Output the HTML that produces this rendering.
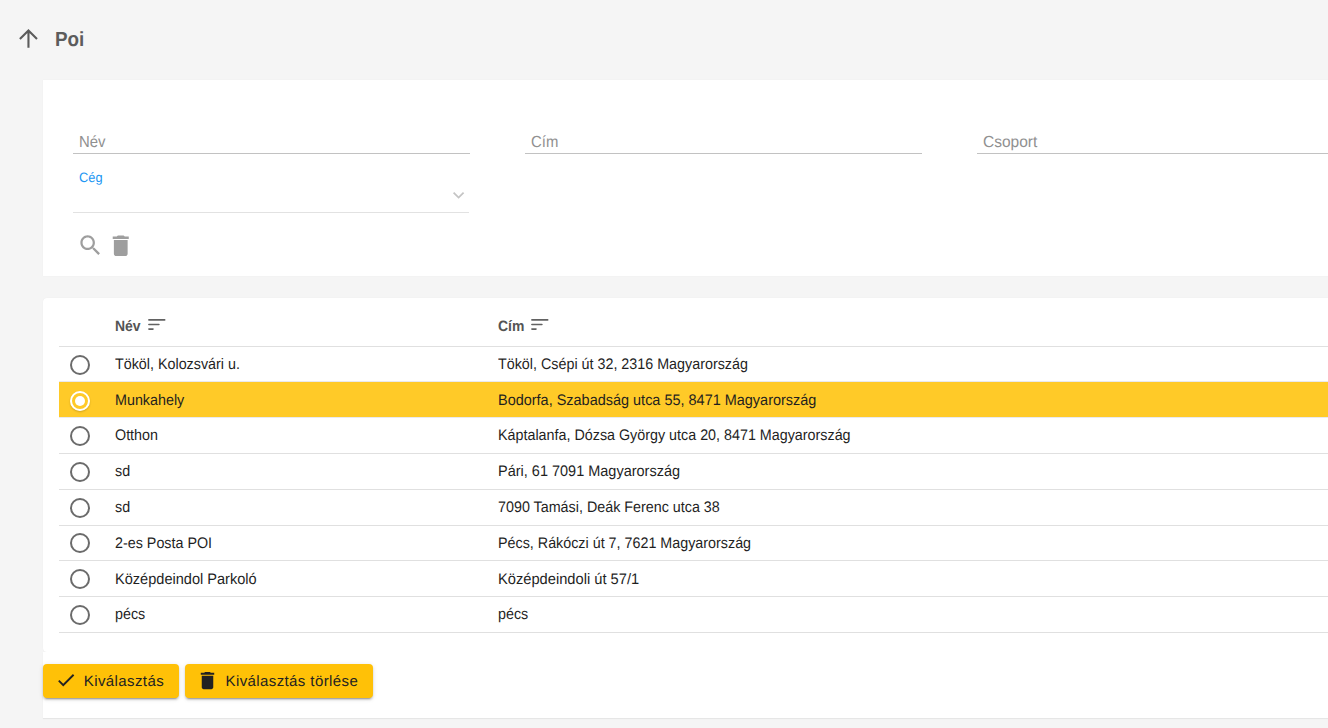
<!DOCTYPE html>
<html><head><meta charset="utf-8">
<style>
html,body{margin:0;padding:0;}
body{width:1328px;height:728px;overflow:hidden;text-rendering:geometricPrecision;background:#f5f5f5;position:relative;font-family:"Liberation Sans",sans-serif;}
.a{position:absolute;white-space:nowrap;line-height:1;transform-origin:0 0;}
.card{position:absolute;background:#fff;}
.uline{position:absolute;height:1px;background:#c2c2c2;}
.rline{position:absolute;left:59px;width:1269px;height:1px;background:#e0e0e0;}
.radio{position:absolute;left:70px;width:16px;height:16px;border:2px solid #6b6b6b;border-radius:50%;}
.t{position:absolute;white-space:nowrap;line-height:1;font-size:15.3px;color:#1f1f1f;transform:scaleX(0.936);transform-origin:0 0;}
.lbl{font-size:16px;color:#909090;transform:scaleX(0.93);}
.hd{font-size:15px;font-weight:bold;color:#545454;transform:scaleX(0.93);}
.btn{position:absolute;top:664px;height:34px;background:#ffc107;border-radius:4px;box-shadow:0 3px 1px -2px rgba(0,0,0,.2),0 2px 2px 0 rgba(0,0,0,.14),0 1px 5px 0 rgba(0,0,0,.12);}
.bt{font-size:15px;letter-spacing:0.4px;color:#222222;}
</style></head>
<body>

<svg class="a" style="left:0;top:0" width="60" height="60" viewBox="0 0 60 60"><path d="M28.46 31.5V47.75M19.9 39.1L28.46 30.6L37 39.1" fill="none" stroke="#5c5c5c" stroke-width="2.1"/></svg>
<div class="a" style="left:54.9px;top:30.2px;font-size:20.5px;font-weight:bold;color:#5c5c5c;transform:scaleX(0.92)">Poi</div>
<div class="card" style="left:43px;top:80px;width:1300px;height:196px;box-shadow:0 0 1px rgba(0,0,0,.06)"></div>
<div class="a lbl" style="left:79.3px;top:134.9px">Név</div>
<div class="uline" style="left:73px;top:153px;width:397px"></div>
<div class="a lbl" style="left:531.3px;top:134.9px">Cím</div>
<div class="uline" style="left:525px;top:153px;width:397px"></div>
<div class="a lbl" style="left:983.3px;top:134.9px;transform:scaleX(0.97)">Csoport</div>
<div class="uline" style="left:977px;top:153px;width:360px"></div>
<div class="a" style="left:79px;top:170.5px;font-size:13.5px;color:#2196f3;transform:scaleX(0.95)">Cég</div>
<div class="uline" style="left:73px;top:212px;width:396px;background:#e2e2e2"></div>
<svg class="a" style="left:440px;top:180px" width="40" height="30" viewBox="0 0 40 30"><path d="M13.6 12.6l5 5 5-5" fill="none" stroke="#c4c4c4" stroke-width="1.7"/></svg>
<svg class="a" style="left:76.7px;top:231.7px" width="26.9" height="26.9" viewBox="0 0 24 24"><path fill="#9e9e9e" d="M15.5 14h-.79l-.28-.27C15.41 12.59 16 11.11 16 9.5 16 5.91 13.09 3 9.5 3S3 5.91 3 9.5 5.91 16 9.5 16c1.61 0 3.09-.59 4.23-1.57l.27.28v.79l5 4.99L20.49 19l-4.99-5zm-6 0C7.01 14 5 11.99 5 9.5S7.01 5 9.5 5 14 7.01 14 9.5 11.99 14 9.5 14z"/></svg>
<svg class="a" style="left:107.25px;top:231.6px" width="27.5" height="27.5" viewBox="0 0 24 24"><path fill="#9e9e9e" d="M6 19c0 1.1.9 2 2 2h8c1.1 0 2-.9 2-2V7H6v12zM19 4h-3.5l-1-1h-5l-1 1H5v2h14V4z"/></svg>
<div class="card" style="left:43px;top:298px;width:1300px;height:354px;border-radius:4px;box-shadow:0 0 1px rgba(0,0,0,.08)"></div>
<div class="card" style="left:43px;top:652px;width:1300px;height:66px;box-shadow:0 1px 1px rgba(0,0,0,.06)"></div>
<div class="a hd" style="left:114.7px;top:319px">Név</div>
<svg class="a" style="left:148.0px;top:310px" width="24" height="24" viewBox="0 0 24 24"><path d="M0.9 9.9h15.8M0.9 14.5h10M0.9 19.1h4.1" stroke="#626262" stroke-width="1.6" stroke-linecap="round" fill="none"/></svg>
<div class="a hd" style="left:497.7px;top:319px">Cím</div>
<svg class="a" style="left:531.2px;top:310px" width="24" height="24" viewBox="0 0 24 24"><path d="M0.9 9.9h15.8M0.9 14.5h10M0.9 19.1h4.1" stroke="#626262" stroke-width="1.6" stroke-linecap="round" fill="none"/></svg>
<div class="rline" style="top:346px"></div>
<div class="rline" style="top:381px;background:#e9e9ee"></div>
<div class="rline" style="top:417px;background:#e9e9ee"></div>
<div class="rline" style="top:453px"></div>
<div class="rline" style="top:489px"></div>
<div class="rline" style="top:525px"></div>
<div class="rline" style="top:560px"></div>
<div class="rline" style="top:596px"></div>
<div class="rline" style="top:632px"></div>
<div style="position:absolute;left:59px;top:382px;width:1269px;height:35px;background:#ffca28"></div>
<div class="radio" style="top:355px"></div>
<div class="t" style="left:115px;top:357.00px;transform:scaleX(0.9360)">Tököl, Kolozsvári u.</div>
<div class="t" style="left:498px;top:357.00px;transform:scaleX(0.9360)">Tököl, Csépi út 32, 2316 Magyarország</div>
<div class="radio" style="top:391px;border-color:#fff;box-shadow:0 1px 2px rgba(0,0,0,.2)"><div style="position:absolute;left:3px;top:3px;width:10px;height:10px;border-radius:50%;background:#fff"></div></div>
<div class="t" style="left:115px;top:393.00px;transform:scaleX(0.9360)">Munkahely</div>
<div class="t" style="left:498px;top:393.00px;transform:scaleX(0.9454)">Bodorfa, Szabadság utca 55, 8471 Magyarország</div>
<div class="radio" style="top:426px"></div>
<div class="t" style="left:115px;top:428.00px;transform:scaleX(0.9360)">Otthon</div>
<div class="t" style="left:498px;top:428.00px;transform:scaleX(0.9360)">Káptalanfa, Dózsa György utca 20, 8471 Magyarország</div>
<div class="radio" style="top:462px"></div>
<div class="t" style="left:115px;top:464.00px;transform:scaleX(0.9360)">sd</div>
<div class="t" style="left:498px;top:464.00px;transform:scaleX(0.9472)">Pári, 61 7091 Magyarország</div>
<div class="radio" style="top:498px"></div>
<div class="t" style="left:115px;top:500.00px;transform:scaleX(0.9360)">sd</div>
<div class="t" style="left:498px;top:500.00px;transform:scaleX(0.9360)">7090 Tamási, Deák Ferenc utca 38</div>
<div class="radio" style="top:533px"></div>
<div class="t" style="left:115px;top:536.00px;transform:scaleX(0.9360)">2-es Posta POI</div>
<div class="t" style="left:498px;top:536.00px;transform:scaleX(0.9360)">Pécs, Rákóczi út 7, 7621 Magyarország</div>
<div class="radio" style="top:569px"></div>
<div class="t" style="left:115px;top:572.00px;transform:scaleX(0.9519)">Középdeindol Parkoló</div>
<div class="t" style="left:498px;top:572.00px;transform:scaleX(0.9594)">Középdeindoli út 57/1</div>
<div class="radio" style="top:605px"></div>
<div class="t" style="left:115px;top:607.00px;transform:scaleX(0.9360)">pécs</div>
<div class="t" style="left:498px;top:607.00px;transform:scaleX(0.9360)">pécs</div>
<div class="btn" style="left:43px;width:136px"></div>
<svg class="a" style="left:55px;top:669px" width="22" height="22" viewBox="0 0 24 24"><path fill="#222222" d="M9 16.17L4.83 12l-1.42 1.41L9 19 21 7l-1.41-1.41z"/></svg>
<div class="a bt" style="left:83.8px;top:673.7px">Kiválasztás</div>
<div class="btn" style="left:185px;width:188px"></div>
<svg class="a" style="left:196px;top:669px" width="23" height="23" viewBox="0 0 24 24"><path fill="#222222" d="M6 19c0 1.1.9 2 2 2h8c1.1 0 2-.9 2-2V7H6v12zM19 4h-3.5l-1-1h-5l-1 1H5v2h14V4z"/></svg>
<div class="a bt" style="left:225.5px;top:673.7px">Kiválasztás törlése</div>
</body></html>
